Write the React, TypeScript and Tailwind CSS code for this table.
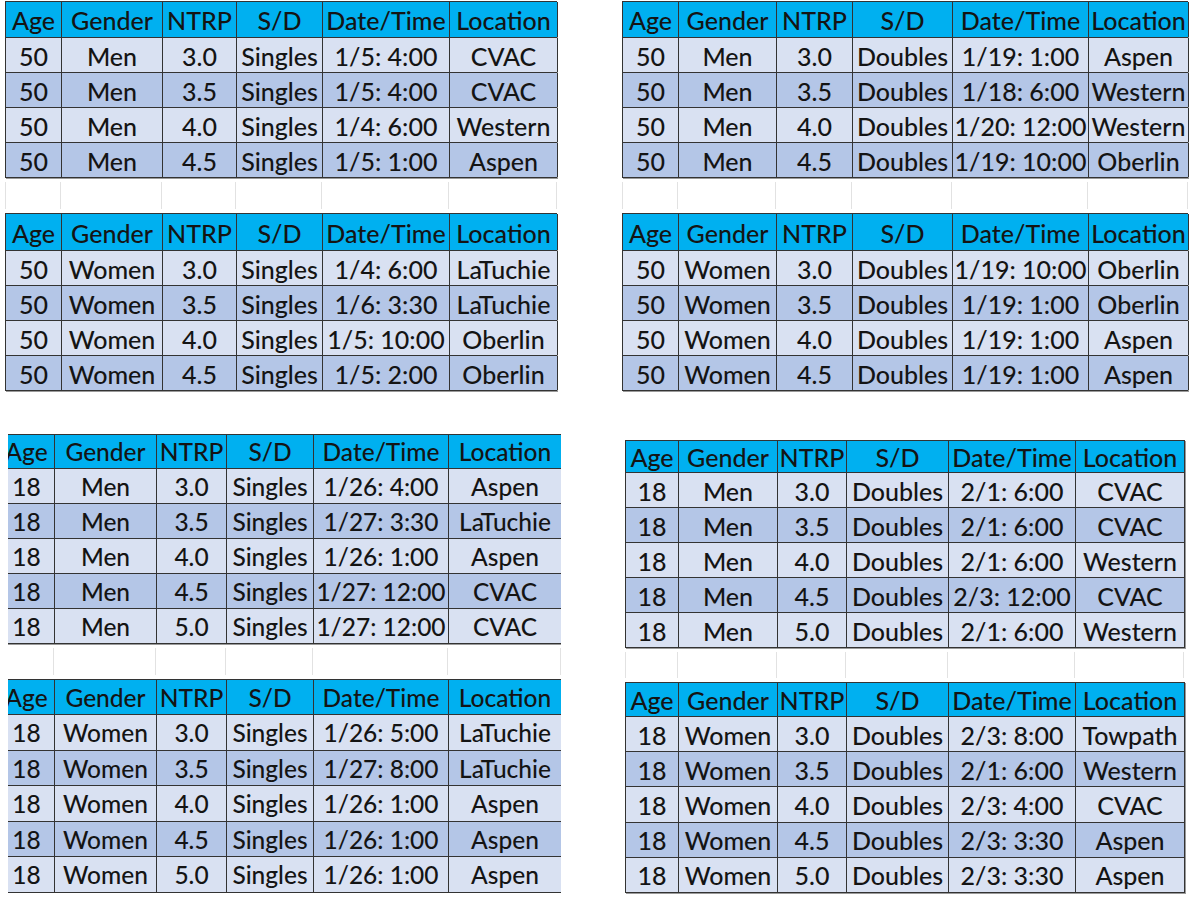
const HEAD = ['Age', 'Gender', 'NTRP', 'S/D', 'Date/Time', 'Location'];

type Row = string[];

const line = 'border-[#333333]';

function Table({
  cols,
  head,
  row,
  rows,
}: {
  cols: string[];
  head: string;
  row: string;
  rows: Row[];
}) {
  return (
    <div className="border-l border-t border-[#333333] shadow-[1px_1px_0_#9a9a9a]">
      <div className={`flex bg-[#00b0f0] border-b ${line} ${head}`}>
        {HEAD.map((h, i) => (
          <div
            key={h}
            className={`${cols[i]} shrink-0 flex items-center justify-center pt-[2px] border-r ${line} whitespace-nowrap`}
          >
            {h}
          </div>
        ))}
      </div>
      {rows.map((r, ri) => (
        <div
          key={ri}
          className={`flex border-b ${line} ${row} ${ri % 2 ? 'bg-[#b4c6e7]' : 'bg-[#d9e1f2]'}`}
        >
          {r.map((c, ci) => (
            <div
              key={ci}
              className={`${cols[ci]} shrink-0 flex items-center justify-center pt-[2px] border-r ${line} whitespace-nowrap`}
            >
              {c}
            </div>
          ))}
        </div>
      ))}
    </div>
  );
}

// empty spreadsheet row between two tables, only the faint gridlines show
function Gap({ cols, h }: { cols: string[]; h: string }) {
  return (
    <div className={`flex ${h} py-[4px]`}>
      {cols.map((c, i) => (
        <div
          key={i}
          className={`${c} shrink-0 border-r border-[#e2e2e2] ${i === 0 ? 'border-l' : ''}`}
        />
      ))}
    </div>
  );
}

const tlCols = ['w-[56px]', 'w-[101px]', 'w-[74px]', 'w-[86px]', 'w-[127px]', 'w-[108px]'];
const trCols = ['w-[56px]', 'w-[98px]', 'w-[76px]', 'w-[100px]', 'w-[136px]', 'w-[100px]'];
const blCols = ['w-[56px]', 'w-[102px]', 'w-[70px]', 'w-[87px]', 'w-[135px]', 'w-[113px]'];
const brCols = ['w-[53px]', 'w-[99px]', 'w-[69px]', 'w-[102px]', 'w-[127px]', 'w-[109px]'];

const menSingles50: Row[] = [
  ['50', 'Men', '3.0', 'Singles', '1/5: 4:00', 'CVAC'],
  ['50', 'Men', '3.5', 'Singles', '1/5: 4:00', 'CVAC'],
  ['50', 'Men', '4.0', 'Singles', '1/4: 6:00', 'Western'],
  ['50', 'Men', '4.5', 'Singles', '1/5: 1:00', 'Aspen'],
];
const womenSingles50: Row[] = [
  ['50', 'Women', '3.0', 'Singles', '1/4: 6:00', 'LaTuchie'],
  ['50', 'Women', '3.5', 'Singles', '1/6: 3:30', 'LaTuchie'],
  ['50', 'Women', '4.0', 'Singles', '1/5: 10:00', 'Oberlin'],
  ['50', 'Women', '4.5', 'Singles', '1/5: 2:00', 'Oberlin'],
];
const menDoubles50: Row[] = [
  ['50', 'Men', '3.0', 'Doubles', '1/19: 1:00', 'Aspen'],
  ['50', 'Men', '3.5', 'Doubles', '1/18: 6:00', 'Western'],
  ['50', 'Men', '4.0', 'Doubles', '1/20: 12:00', 'Western'],
  ['50', 'Men', '4.5', 'Doubles', '1/19: 10:00', 'Oberlin'],
];
const womenDoubles50: Row[] = [
  ['50', 'Women', '3.0', 'Doubles', '1/19: 10:00', 'Oberlin'],
  ['50', 'Women', '3.5', 'Doubles', '1/19: 1:00', 'Oberlin'],
  ['50', 'Women', '4.0', 'Doubles', '1/19: 1:00', 'Aspen'],
  ['50', 'Women', '4.5', 'Doubles', '1/19: 1:00', 'Aspen'],
];
const menSingles18: Row[] = [
  ['18', 'Men', '3.0', 'Singles', '1/26: 4:00', 'Aspen'],
  ['18', 'Men', '3.5', 'Singles', '1/27: 3:30', 'LaTuchie'],
  ['18', 'Men', '4.0', 'Singles', '1/26: 1:00', 'Aspen'],
  ['18', 'Men', '4.5', 'Singles', '1/27: 12:00', 'CVAC'],
  ['18', 'Men', '5.0', 'Singles', '1/27: 12:00', 'CVAC'],
];
const womenSingles18: Row[] = [
  ['18', 'Women', '3.0', 'Singles', '1/26: 5:00', 'LaTuchie'],
  ['18', 'Women', '3.5', 'Singles', '1/27: 8:00', 'LaTuchie'],
  ['18', 'Women', '4.0', 'Singles', '1/26: 1:00', 'Aspen'],
  ['18', 'Women', '4.5', 'Singles', '1/26: 1:00', 'Aspen'],
  ['18', 'Women', '5.0', 'Singles', '1/26: 1:00', 'Aspen'],
];
const menDoubles18: Row[] = [
  ['18', 'Men', '3.0', 'Doubles', '2/1: 6:00', 'CVAC'],
  ['18', 'Men', '3.5', 'Doubles', '2/1: 6:00', 'CVAC'],
  ['18', 'Men', '4.0', 'Doubles', '2/1: 6:00', 'Western'],
  ['18', 'Men', '4.5', 'Doubles', '2/3: 12:00', 'CVAC'],
  ['18', 'Men', '5.0', 'Doubles', '2/1: 6:00', 'Western'],
];
const womenDoubles18: Row[] = [
  ['18', 'Women', '3.0', 'Doubles', '2/3: 8:00', 'Towpath'],
  ['18', 'Women', '3.5', 'Doubles', '2/1: 6:00', 'Western'],
  ['18', 'Women', '4.0', 'Doubles', '2/3: 4:00', 'CVAC'],
  ['18', 'Women', '4.5', 'Doubles', '2/3: 3:30', 'Aspen'],
  ['18', 'Women', '5.0', 'Doubles', '2/3: 3:30', 'Aspen'],
];

export default function App() {
  return (
    <div className="w-[1193px] h-[897px] overflow-hidden bg-white text-[#141414] font-medium [font-family:Lato,'Open_Sans',sans-serif] leading-none">
      {/* 50 and over */}
      <div className="flex items-start h-[434px] pt-[1px] text-[25px]">
        <div className="ml-[5px] w-[552px]">
          <Table cols={tlCols} head="h-[36px]" row="h-[35px]" rows={menSingles50} />
          <Gap cols={tlCols} h="h-[35px]" />
          <Table cols={tlCols} head="h-[37px]" row="h-[35px]" rows={womenSingles50} />
        </div>
        <div className="ml-[65px] w-[566px]">
          <Table cols={trCols} head="h-[36px]" row="h-[35px]" rows={menDoubles50} />
          <Gap cols={trCols} h="h-[35px]" />
          <Table cols={trCols} head="h-[37px]" row="h-[35px]" rows={womenDoubles50} />
        </div>
      </div>

      {/* 18 and over */}
      <div className="flex items-start">
        <div className="ml-[8px] w-[553px] overflow-hidden text-[24.5px]">
          <div className="ml-[-10px] w-[563px]">
            <Table cols={blCols} head="h-[34px]" row="h-[35px]" rows={menSingles18} />
            <Gap cols={blCols} h="h-[35px]" />
            <Table cols={blCols} head="h-[35px]" row="h-[35.6px]" rows={womenSingles18} />
          </div>
        </div>
        <div className="ml-[64px] mt-[6px] w-[560px] text-[25px]">
          <Table cols={brCols} head="h-[32px]" row="h-[35px]" rows={menDoubles18} />
          <Gap cols={brCols} h="h-[34px]" />
          <Table cols={brCols} head="h-[34px]" row="h-[35.2px]" rows={womenDoubles18} />
        </div>
      </div>
    </div>
  );
}
